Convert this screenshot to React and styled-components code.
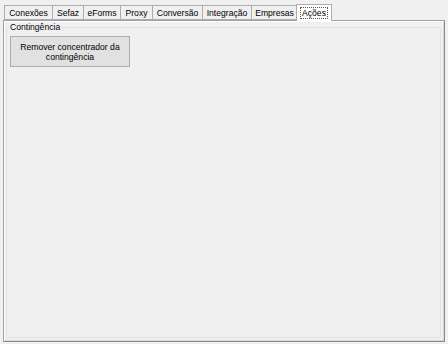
import React from 'react';
import styled, { createGlobalStyle } from 'styled-components';

const GlobalStyle = createGlobalStyle`
  html, body {
    margin: 0;
    padding: 0;
    background: #f0f0f0;
  }
  body {
    font-family: "Liberation Sans", Arial, sans-serif;
    font-size: 8.6px;
    color: #000;
  }
`;

const Window = styled.div`
  width: 448px;
  height: 344px;
  box-sizing: border-box;
  padding: 4px 3px 2px 3px;
  display: flex;
  flex-direction: column;
`;

const TabStrip = styled.div`
  display: flex;
  align-items: flex-end;
  height: 17px;
  padding-left: 1px;
  position: relative;
  z-index: 1;
  margin-bottom: -1px;
`;

const Tab = styled.div`
  width: ${(p) => p.$w}px;
  height: ${(p) => (p.$active ? 17 : 15)}px;
  box-sizing: border-box;
  margin-left: ${(p) => (p.$active ? -2 : -1)}px;
  margin-right: ${(p) => (p.$active ? -2 : 0)}px;
  margin-bottom: ${(p) => (p.$active ? 0 : 1)}px;
  border: 1px solid #adadad;
  border-bottom: ${(p) => (p.$active ? 'none' : '1px solid #adadad')};
  background: ${(p) => (p.$active ? '#ffffff' : '#f0f0f0')};
  display: flex;
  align-items: center;
  justify-content: center;
  white-space: nowrap;
  position: relative;
  z-index: ${(p) => (p.$active ? 2 : 1)};
  &:first-child {
    margin-left: 0;
  }
`;

const FocusLabel = styled.span`
  outline: 1px dotted #555;
  outline-offset: 0;
  padding: 0 1px;
  line-height: 10px;
`;

const Panel = styled.div`
  flex: 1;
  box-sizing: border-box;
  border: 1px solid #a0a0a0;
  border-right-color: #8a8a8a;
  border-bottom-color: #8a8a8a;
  box-shadow: inset 1px 1px 0 #ffffff, inset -1px -1px 0 #d6d6d6;
  padding: 1px 3px 3px 2px;
  display: flex;
  flex-direction: column;
`;

const GroupBox = styled.fieldset`
  flex: 1;
  margin: 0;
  padding: 3px 5px 0 2px;
  border: 1px solid #dde3e8;
  border-radius: 2px;
  min-width: 0;
`;

const Legend = styled.legend`
  padding: 0 1px;
  margin-left: 0;
  font-size: 8.6px;
  line-height: 11px;
`;

const ActionButton = styled.button`
  width: 120px;
  height: 31px;
  box-sizing: border-box;
  background: #e1e1e1;
  border: 1px solid #adadad;
  font-family: "Liberation Sans", Arial, sans-serif;
  font-size: 8.6px;
  line-height: 10px;
  color: #000;
  padding: 0 6px;
  text-align: center;
  margin-left: 1px;
`;

const tabs = [
  { label: 'Conexões', w: 49 },
  { label: 'Sefaz', w: 32 },
  { label: 'eForms', w: 38 },
  { label: 'Proxy', w: 33 },
  { label: 'Conversão', w: 51 },
  { label: 'Integração', w: 50 },
  { label: 'Empresas', w: 47 },
  { label: 'Ações', w: 36, active: true },
];

export default function App() {
  return (
    <>
      <GlobalStyle />
      <Window>
        <TabStrip>
          {tabs.map((t) => (
            <Tab key={t.label} $w={t.w} $active={t.active}>
              {t.active ? <FocusLabel>{t.label}</FocusLabel> : t.label}
            </Tab>
          ))}
        </TabStrip>
        <Panel>
          <GroupBox>
            <Legend>Contingência</Legend>
            <ActionButton type="button">
              Remover concentrador da
              <br />
              contingência
            </ActionButton>
          </GroupBox>
        </Panel>
      </Window>
    </>
  );
}
